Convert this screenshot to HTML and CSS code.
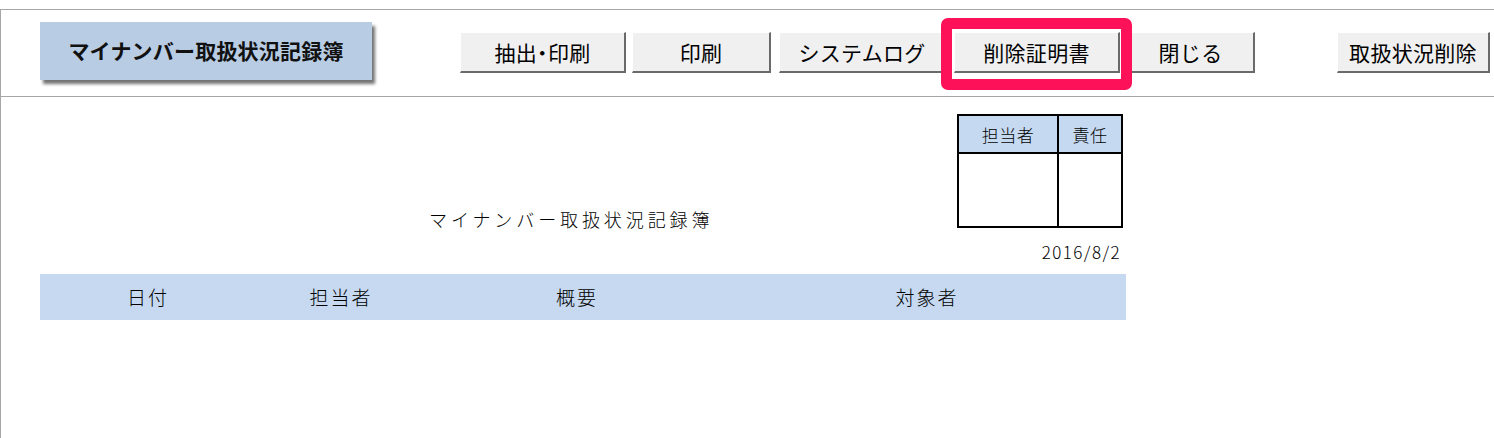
FILE: index.html
```html
<!DOCTYPE html>
<html lang="ja">
<head>
    <meta charset="UTF-8">
    <title>マイナンバー取扱状況記録簿</title>
    <link rel="stylesheet" href="styles.css">
</head>
<body>
    <div class="frame">
        <!-- Top toolbar -->
        <div class="toolbar">
            <div class="title-box">マイナンバー取扱状況記録簿</div>
            <button class="btn btn-extract">抽出・印刷</button>
            <button class="btn btn-print">印刷</button>
            <button class="btn btn-log">システムログ</button>
            <div class="highlight">
                <button class="btn btn-cert">削除証明書</button>
                <span class="highlight-frame"></span>
            </div>
            <button class="btn btn-close">閉じる</button>
            <button class="btn btn-delete">取扱状況削除</button>
        </div>

        <!-- Sheet -->
        <div class="sheet">
            <div class="sheet-top">
                <div class="sheet-title">マイナンバー取扱状況記録簿</div>
                <table class="approval">
                    <tr>
                        <th class="col-staff">担当者</th>
                        <th class="col-resp">責任</th>
                    </tr>
                    <tr>
                        <td></td>
                        <td></td>
                    </tr>
                </table>
            </div>
            <div class="sheet-date">2016/8/2</div>
            <div class="list-header">
                <div class="col col-date">日付</div>
                <div class="col col-person">担当者</div>
                <div class="col col-summary">概要</div>
                <div class="col col-target">対象者</div>
            </div>
        </div>
    </div>
</body>
</html>
```

FILE: styles.css
```css
* {
    box-sizing: border-box;
}
body {
    margin: 0;
    background: #ffffff;
    font-family: "Noto Sans CJK JP", "Noto Sans", sans-serif;
    color: #111;
    overflow: hidden;
}
.frame {
    margin-top: 9px;
    border-top: 1px solid #a6a6a6;
    border-left: 1px solid #a6a6a6;
    height: 429px;
}

/* Toolbar */
.toolbar {
    display: flex;
    align-items: flex-start;
    height: 87px;
    padding-left: 39px;
    border-bottom: 1px solid #a6a6a6;
}
.title-box {
    width: 332px;
    height: 58px;
    margin-top: 12px;
    background-color: #b8cce4;
    box-shadow: 3px 4px 3px rgba(0, 0, 0, 0.55);
    font-size: 21px;
    font-weight: bold;
    line-height: 56px;
    text-align: center;
    letter-spacing: 0.2px;
}
.btn {
    height: 41px;
    margin-top: 22px;
    padding: 0;
    background-color: #f0f0f0;
    border: none;
    border-top: 1px solid #ffffff;
    border-left: 1px solid #ffffff;
    border-right: 2px solid #6a6a6a;
    border-bottom: 2px solid #6a6a6a;
    font-family: inherit;
    font-size: 21px;
    font-weight: 400;
    color: #000;
    line-height: 36px;
    letter-spacing: 0.3px;
}
.btn-extract { width: 166px; margin-left: 88px; font-feature-settings: "palt"; }
.btn-print   { width: 139px; margin-left: 6px; }
.btn-log     { width: 167px; margin-left: 8px; }
.btn-cert    { width: 166px; margin-top: 0; display: block; }
.btn-close   { width: 128px; margin-left: 7px; }
.btn-delete  { width: 153px; margin-left: 82px; }

.highlight {
    position: relative;
    margin-left: 8px;
    margin-top: 22px;
}
.highlight-frame {
    position: absolute;
    top: -14px;
    left: -13px;
    right: -12px;
    bottom: -17px;
    border: 11px solid #fd1259;
    border-radius: 7px;
    z-index: 2;
}

/* Sheet */
.sheet {
    width: 1125px;
    padding-left: 39px;
    font-weight: 300;
    color: #000;
}
.sheet-top {
    display: flex;
    align-items: flex-start;
    padding-top: 17px;
}
.sheet-title {
    margin-left: 389px;
    margin-top: 93px;
    margin-right: auto;
    font-size: 18px;
    line-height: 24px;
    letter-spacing: 3.9px;
}
.approval {
    border-collapse: collapse;
    margin-right: 3px;
}
.approval th,
.approval td {
    border: 2px solid #000;
    padding: 0;
}
.approval th {
    height: 38px;
    background-color: #c5d9f1;
    font-size: 17px;
    font-weight: 300;
    letter-spacing: 0.5px;
}
.approval td {
    height: 74px;
}
.col-staff { width: 100px; }
.col-resp  { width: 64px; }

.sheet-date {
    margin-top: 11px;
    padding-right: 5px;
    text-align: right;
    font-size: 17px;
    line-height: 20px;
    letter-spacing: 1.4px;
}

.list-header {
    display: flex;
    height: 46px;
    margin-top: 12px;
    background-color: #c6d9f0;
    font-size: 19px;
    line-height: 46px;
    letter-spacing: 2px;
}
.col {
    text-align: center;
}
.col-date    { width: 216px; }
.col-person  { width: 170px; }
.col-summary { width: 302px; }
.col-target  { width: 398px; }
```
